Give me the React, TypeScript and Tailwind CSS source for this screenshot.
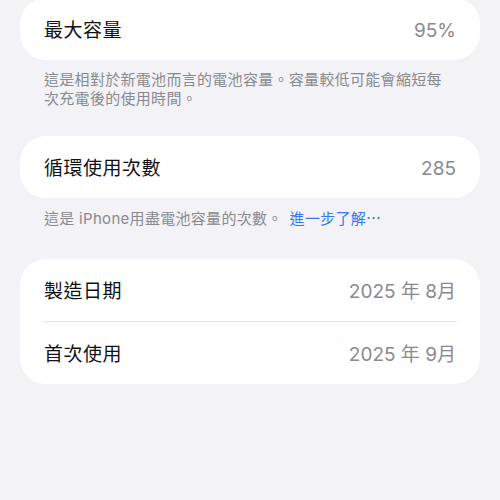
const font = { fontFamily: '"Inter", "Noto Sans CJK TC", sans-serif' };

interface Row {
    label: string;
    value: string;
}

function Card({ rows }: { rows: Row[] }) {
    return (
        <div className="bg-white rounded-[26px] overflow-hidden">
            {rows.map((row, i) => (
                <div key={row.label}>
                    {i > 0 && <div className="ml-[23px] mr-[23px] h-px bg-[#e3e3e8]" />}
                    <div className="flex items-center justify-between h-[62px] pt-[4px] pl-[24px] pr-[24px]">
                        <span className="text-[19px] text-[#111] tracking-[0.5px]">{row.label}</span>
                        <span className="text-[19px] text-[#8a8a8e]">{row.value}</span>
                    </div>
                </div>
            ))}
        </div>
    );
}

export default function App() {
    return (
        <div className="w-[500px] h-[500px] bg-[#f2f2f7] overflow-hidden" style={font}>
            <div className="px-[20px] -mt-[2px]">
                {/* Capacidad máxima */}
                <Card rows={[{ label: '最大容量', value: '95%' }]} />
                <p className="pl-[24px] pr-[30px] pt-[10px] text-[15px] leading-[19px] text-[#8a8a8e] tracking-[0.3px]">
                    這是相對於新電池而言的電池容量。容量較低可能會縮短每次充電後的使用時間。
                </p>

                {/* Ciclos */}
                <div className="mt-[28px]">
                    <Card rows={[{ label: '循環使用次數', value: '285' }]} />
                </div>
                <p className="pl-[24px] pt-[11px] text-[15px] leading-[19px] text-[#8a8a8e] tracking-[0.3px]">
                    這是 iPhone用盡電池容量的次數。<span className="text-[#3478f6] ml-[7px]">進一步了解⋯</span>
                </p>

                {/* Fechas */}
                <div className="mt-[31px]">
                    <Card
                        rows={[
                            { label: '製造日期', value: '2025 年 8月' },
                            { label: '首次使用', value: '2025 年 9月' },
                        ]}
                    />
                </div>
            </div>
        </div>
    );
}
